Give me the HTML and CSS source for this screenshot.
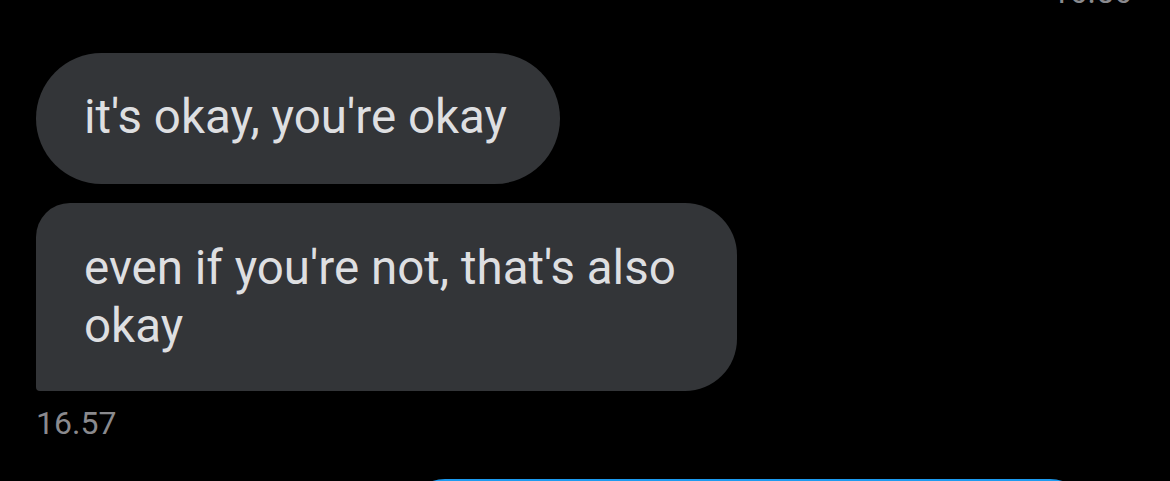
FILE: index.html
```html
<!DOCTYPE html>
<html>
<head>
<meta charset="utf-8">
<link rel="stylesheet" href="styles.css">
</head>
<body>
<div class="chat">
  <div class="time time-top">16.56</div>
  <div class="bubble b1"><span class="txt">it's okay, you're okay</span></div>
  <div class="bubble b2"><span class="txt">even if you're not, that's also<br>okay</span></div>
  <div class="time time-left">16.57</div>
  <div class="out-row"><div class="bubble-out"></div></div>
</div>
</body>
</html>
```
FILE: styles.css
```css
html, body {
  margin: 0;
  padding: 0;
  background: #000;
  width: 1170px;
  height: 481px;
  overflow: hidden;
}
.chat {
  display: flex;
  flex-direction: column;
  align-items: flex-start;
  padding: 0 38px 0 36px;
  font-family: Roboto, "Liberation Sans", sans-serif;
}
.time {
  color: #8a8a8e;
  font-size: 32px;
  line-height: 32px;
}
.time-top {
  align-self: flex-end;
  margin-top: -24px;
}
.bubble {
  background: #333538;
  color: #dedfe1;
  font-size: 47.5px;
  line-height: 58px;
  box-sizing: border-box;
}
.b1 {
  margin-top: 45px;
  height: 131px;
  width: 524px;
  border-radius: 66px;
  padding: 35px 0 0 48px;
}
.b2 {
  margin-top: 19px;
  height: 188px;
  width: 701px;
  border-radius: 34px 52px 52px 4px;
  padding: 36px 0 0 48px;
}
.time-left {
  margin-top: 16px;
}
.out-row {
  align-self: stretch;
  display: flex;
  padding-left: 369px;
  margin-top: 40px;
}
.bubble-out {
  width: 685px;
  height: 40px;
  background: #1d9bf0;
  border-radius: 40px 40px 0 0;
}
```
